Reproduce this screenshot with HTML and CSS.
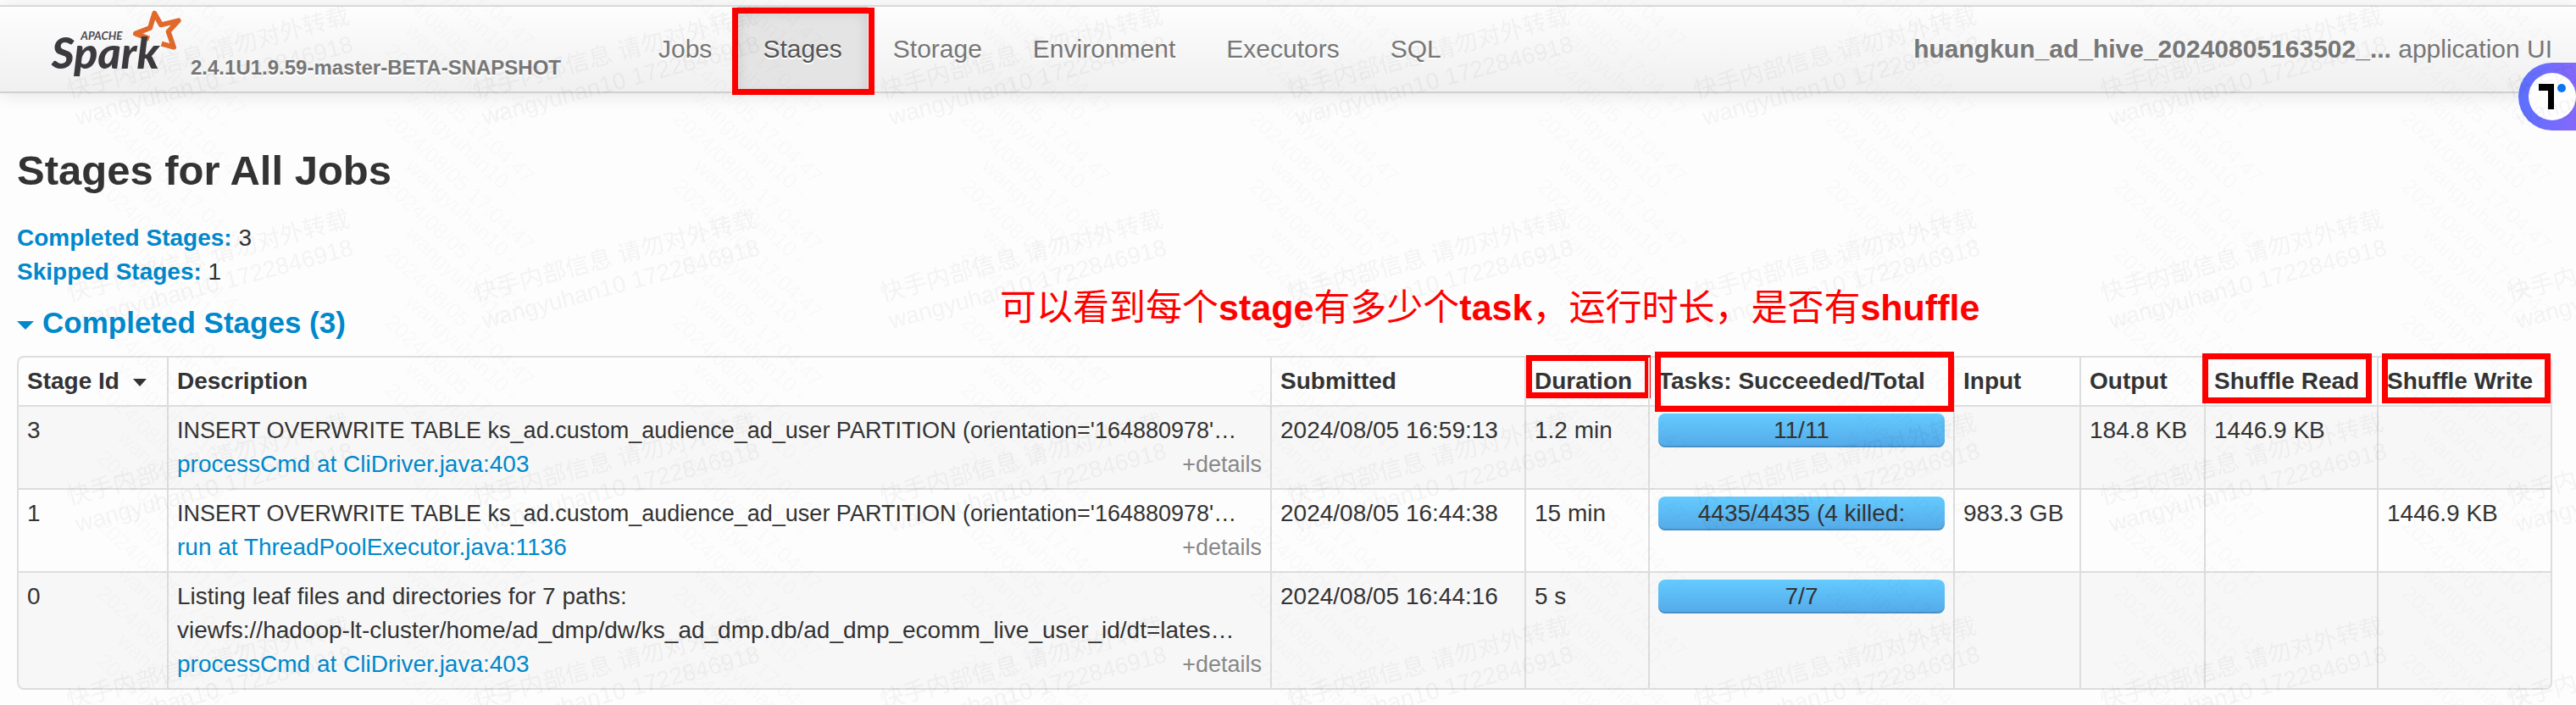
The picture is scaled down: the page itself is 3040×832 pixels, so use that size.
FILE: index.html
```html
<!DOCTYPE html>
<html lang="en">
<head>
<meta charset="utf-8">
<title>Spark - Stages for All Jobs</title>
<link rel="stylesheet" href="styles.css">
</head>
<body>
<header class="navbar">
  <a class="brand" href="#">
    <svg class="logo" viewBox="60 36 462 240" role="img" aria-label="Apache Spark">
      <path class="logo-star" d="M408 137 L360 119 L411 99 L427 47 L450 88 L512 73 L476 112 L495 167 L452 155"/>
      <text class="logo-name" x="62" y="242">Spark</text>
      <text class="logo-apache" x="166" y="141">APACHE</text>
    </svg>
    <span class="version">2.4.1U1.9.59-master-BETA-SNAPSHOT</span>
  </a>
  <nav class="nav">
    <a href="#">Jobs</a>
    <a class="active marked" href="#">Stages</a>
    <a href="#">Storage</a>
    <a href="#">Environment</a>
    <a href="#">Executors</a>
    <a href="#">SQL</a>
  </nav>
  <p class="app-name"><strong>huangkun_ad_hive_20240805163502_...</strong> application UI</p>
</header>

<main class="content">
  <h3 class="title">Stages for All Jobs</h3>
  <ul class="summary">
    <li><a href="#completed">Completed Stages:</a> 3</li>
    <li><a href="#skipped">Skipped Stages:</a> 1</li>
  </ul>
  <div class="section-head">
    <h4 id="completed"><a href="#completed"><span class="caret"></span>Completed Stages (3)</a></h4>
    <p class="note" lang="zh">可以看到每个<b>stage</b>有多少个<b>task</b>，运行时长，是否有<b>shuffle</b></p>
  </div>

  <table class="stages">
    <colgroup>
      <col class="c-id"><col><col class="c-submitted"><col class="c-duration"><col class="c-tasks">
      <col class="c-input"><col class="c-output"><col class="c-read"><col class="c-write">
    </colgroup>
    <thead>
      <tr>
        <th>Stage Id<span class="caret sort"></span></th>
        <th>Description</th>
        <th>Submitted</th>
        <th class="mark mark-duration">Duration</th>
        <th class="mark mark-tasks">Tasks: Succeeded/Total</th>
        <th>Input</th>
        <th>Output</th>
        <th class="mark mark-read">Shuffle Read</th>
        <th class="mark mark-write">Shuffle Write</th>
      </tr>
    </thead>
    <tbody>
      <tr>
        <td>3</td>
        <td>
          <div class="query">INSERT OVERWRITE TABLE ks_ad.custom_audience_ad_user PARTITION (orientation='164880978'…</div>
          <div class="desc-foot"><a href="#">processCmd at CliDriver.java:403</a><button type="button">+details</button></div>
        </td>
        <td>2024/08/05 16:59:13</td>
        <td>1.2 min</td>
        <td><div class="bar">11/11</div></td>
        <td></td>
        <td>184.8 KB</td>
        <td>1446.9 KB</td>
        <td></td>
      </tr>
      <tr>
        <td>1</td>
        <td>
          <div class="query">INSERT OVERWRITE TABLE ks_ad.custom_audience_ad_user PARTITION (orientation='164880978'…</div>
          <div class="desc-foot"><a href="#">run at ThreadPoolExecutor.java:1136</a><button type="button">+details</button></div>
        </td>
        <td>2024/08/05 16:44:38</td>
        <td>15 min</td>
        <td><div class="bar">4435/4435 (4 killed:</div></td>
        <td>983.3 GB</td>
        <td></td>
        <td></td>
        <td>1446.9 KB</td>
      </tr>
      <tr>
        <td>0</td>
        <td>
          <div>Listing leaf files and directories for 7 paths:<br>viewfs://hadoop-lt-cluster/home/ad_dmp/dw/ks_ad_dmp.db/ad_dmp_ecomm_live_user_id/dt=lates…</div>
          <div class="desc-foot"><a href="#">processCmd at CliDriver.java:403</a><button type="button">+details</button></div>
        </td>
        <td>2024/08/05 16:44:16</td>
        <td>5 s</td>
        <td><div class="bar">7/7</div></td>
        <td></td>
        <td></td>
        <td></td>
        <td></td>
      </tr>
    </tbody>
  </table>
</main>

<button class="float-button" type="button" aria-label="Translate">
  <svg viewBox="0 0 56 56" aria-hidden="true">
    <circle cx="28" cy="28" r="28" fill="#fff"/>
    <path d="M12 13h18v30h-7V21H12z" fill="#000"/>
    <circle cx="39" cy="18" r="5" fill="#0b76f0"/>
  </svg>
</button>

<svg class="watermark" aria-hidden="true">
  <defs>
    <g id="stamp">
      <text transform="translate(13 62) rotate(43)">2024/08/05 17:04:47</text>
      <text transform="translate(37 38) rotate(43)">wangyuhan10 -</text>
    </g>
    <pattern id="stamps" x="100" y="0" width="340" height="80" patternUnits="userSpaceOnUse">
      <use href="#stamp" y="-240"/><use href="#stamp" y="-160"/><use href="#stamp" y="-80"/><use href="#stamp"/><use href="#stamp" y="80"/>
    </pattern>
    <pattern id="notices" x="60" y="0" width="480" height="240" patternUnits="userSpaceOnUse">
      <text transform="translate(22 116) rotate(-15)">快手内部信息 请勿对外转载</text>
      <text transform="translate(32 148) rotate(-15)">wangyuhan10 1722846918</text>
    </pattern>
  </defs>
  <rect class="stamps" width="100%" height="100%" fill="url(#stamps)"/>
  <rect class="notices" width="100%" height="100%" fill="url(#notices)"/>
</svg>
</body>
</html>
```
FILE: styles.css
```css
* {
  box-sizing: border-box;
}

body {
  position: relative;
  margin: 0;
  padding-top: 6px;
  min-height: 100vh;
  overflow-x: hidden;
  background: #fdfdfd;
  color: #333;
  font: 28px/40px "Liberation Sans", "Noto Sans CJK SC", sans-serif;
}

a {
  color: #08c;
  text-decoration: none;
}

h3, h4, p, ul {
  margin: 0;
  padding: 0;
}

/* Top bar */
.navbar {
  display: flex;
  height: 104px;
  padding: 0 28px 0 60px;
  border: solid #d9d9d9;
  border-width: 2px 0;
  border-bottom-color: #d0d0d0;
  background: linear-gradient(#fdfdfd, #f0f0f0);
  box-shadow: 0 2px 20px rgba(0, 0, 0, .1);
  color: #777;
  font-size: 30px;
  line-height: 100px;
  white-space: nowrap;
}

.brand {
  display: flex;
  flex: 0 0 687px;
  gap: 11px;
  padding-top: 4px;
  color: #777;
}

.logo {
  flex: none;
  width: 154px;
  height: 80px;
}

.logo-star {
  fill: none;
  stroke: #e0692b;
  stroke-width: 18;
  stroke-linejoin: round;
}

.logo-name {
  fill: #3c3a3e;
  font: italic 900 156px Lato, sans-serif;
}

.logo-apache {
  fill: #4a484c;
  font: italic 700 40px Lato, sans-serif;
}

.version {
  padding-top: 48px;
  font-size: 24px;
  font-weight: bold;
  line-height: 40px;
  text-shadow: 0 2px 0 #fff;
}

.nav {
  display: flex;
}

.nav a {
  height: 100px;
  padding: 0 30px;
  color: #777;
  text-shadow: 0 2px 0 #fff;
}

.nav .active {
  background: #e4e4e4;
  box-shadow: inset 0 6px 16px rgba(0, 0, 0, .125);
  color: #555;
}

.marked {
  position: relative;
}

.marked::after {
  content: "";
  position: absolute;
  inset: 1px -8px -4px -6px;
  border: 7px solid #f00;
}

.app-name {
  margin-left: auto;
}

/* Page body */
.content {
  padding: 51px 28px 20px 20px;
}

.title {
  margin-bottom: 20px;
  font-size: 49px;
  line-height: 80px;
}

.summary {
  list-style: none;
}

.summary a {
  font-weight: bold;
}

.section-head {
  position: relative;
  padding: 20px 0 19px;
}

.section-head h4 {
  font-size: 35px;
  line-height: 40px;
}

.caret {
  display: inline-block;
  margin-right: 10px;
  border: solid transparent;
  border-width: 10px 10px 0;
  border-top-color: currentColor;
  vertical-align: middle;
}

.sort {
  margin: 0 0 0 16px;
  border-width: 9px 8px 0;
}

.note {
  position: absolute;
  top: 0;
  left: 1160px;
  color: #f00;
  font-size: 43px;
  line-height: 44px;
  white-space: nowrap;
}

/* Stage table */
.stages {
  width: 100%;
  border: 2px solid #ddd;
  border-left-width: 0;
  border-radius: 8px;
  border-spacing: 0;
  table-layout: fixed;
}

.c-id { width: 177px; }
.c-submitted { width: 300px; }
.c-duration { width: 146px; }
.c-tasks { width: 360px; }
.c-input { width: 149px; }
.c-output { width: 147px; }
.c-read { width: 204px; }
.c-write { width: 205px; }

.stages th,
.stages td {
  padding: 8px 10px;
  border-left: 2px solid #ddd;
  text-align: left;
  vertical-align: top;
  white-space: nowrap;
}

.stages td {
  border-top: 2px solid #ddd;
}

.stages tbody tr:nth-child(odd) td {
  background: #f7f7f7;
}

.stages th:first-child {
  border-top-left-radius: 8px;
}

.stages tr:last-child td:first-child {
  border-bottom-left-radius: 8px;
}

.stages tr:last-child td:last-child {
  border-bottom-right-radius: 6px;
}

.query {
  font-size: 27px;
}

.desc-foot {
  display: flex;
  justify-content: space-between;
}

.desc-foot button {
  padding: 0;
  border: 0;
  background: none;
  color: #888;
  font: inherit;
  font-size: 27px;
}

.bar {
  overflow: hidden;
  border-radius: 8px;
  background: linear-gradient(#64cbff, #54a9e8);
  box-shadow: inset 0 -2px 0 rgba(0, 0, 0, .15);
  text-align: center;
}

/* Red frames round the annotated headings */
.mark {
  position: relative;
}

.mark::after {
  content: "";
  position: absolute;
  border: 7px solid #f00;
}

.mark-duration::after { inset: -3px -3px 8px 0; }
.mark-tasks::after { inset: -7px -1px -8px 6px; }
.mark-read::after { inset: -5px 6px 2px -4px; }
.mark-write::after { inset: -5px 0 2px 4px; }

/* Later cells must not paint over a frame that crosses their edge */
.mark-duration,
.mark-tasks {
  z-index: 1;
}

/* Floating button on the right edge */
.float-button {
  position: absolute;
  top: 74px;
  right: 0;
  width: 68px;
  height: 80px;
  padding: 12px 0 12px 12px;
  overflow: hidden;
  border: 0;
  border-radius: 40px 0 0 40px;
  background: linear-gradient(90deg, #5b70ff, #8568fb);
}

.float-button svg {
  display: block;
  width: 56px;
  height: 56px;
}

.watermark {
  position: absolute;
  inset: 0;
  width: 100%;
  height: 100%;
  pointer-events: none;
}

.watermark text {
  font-size: 28px;
}

.watermark #stamp text {
  font-size: 25px;
}

.notices {
  opacity: .04;
}

.stamps {
  opacity: .018;
}
```
